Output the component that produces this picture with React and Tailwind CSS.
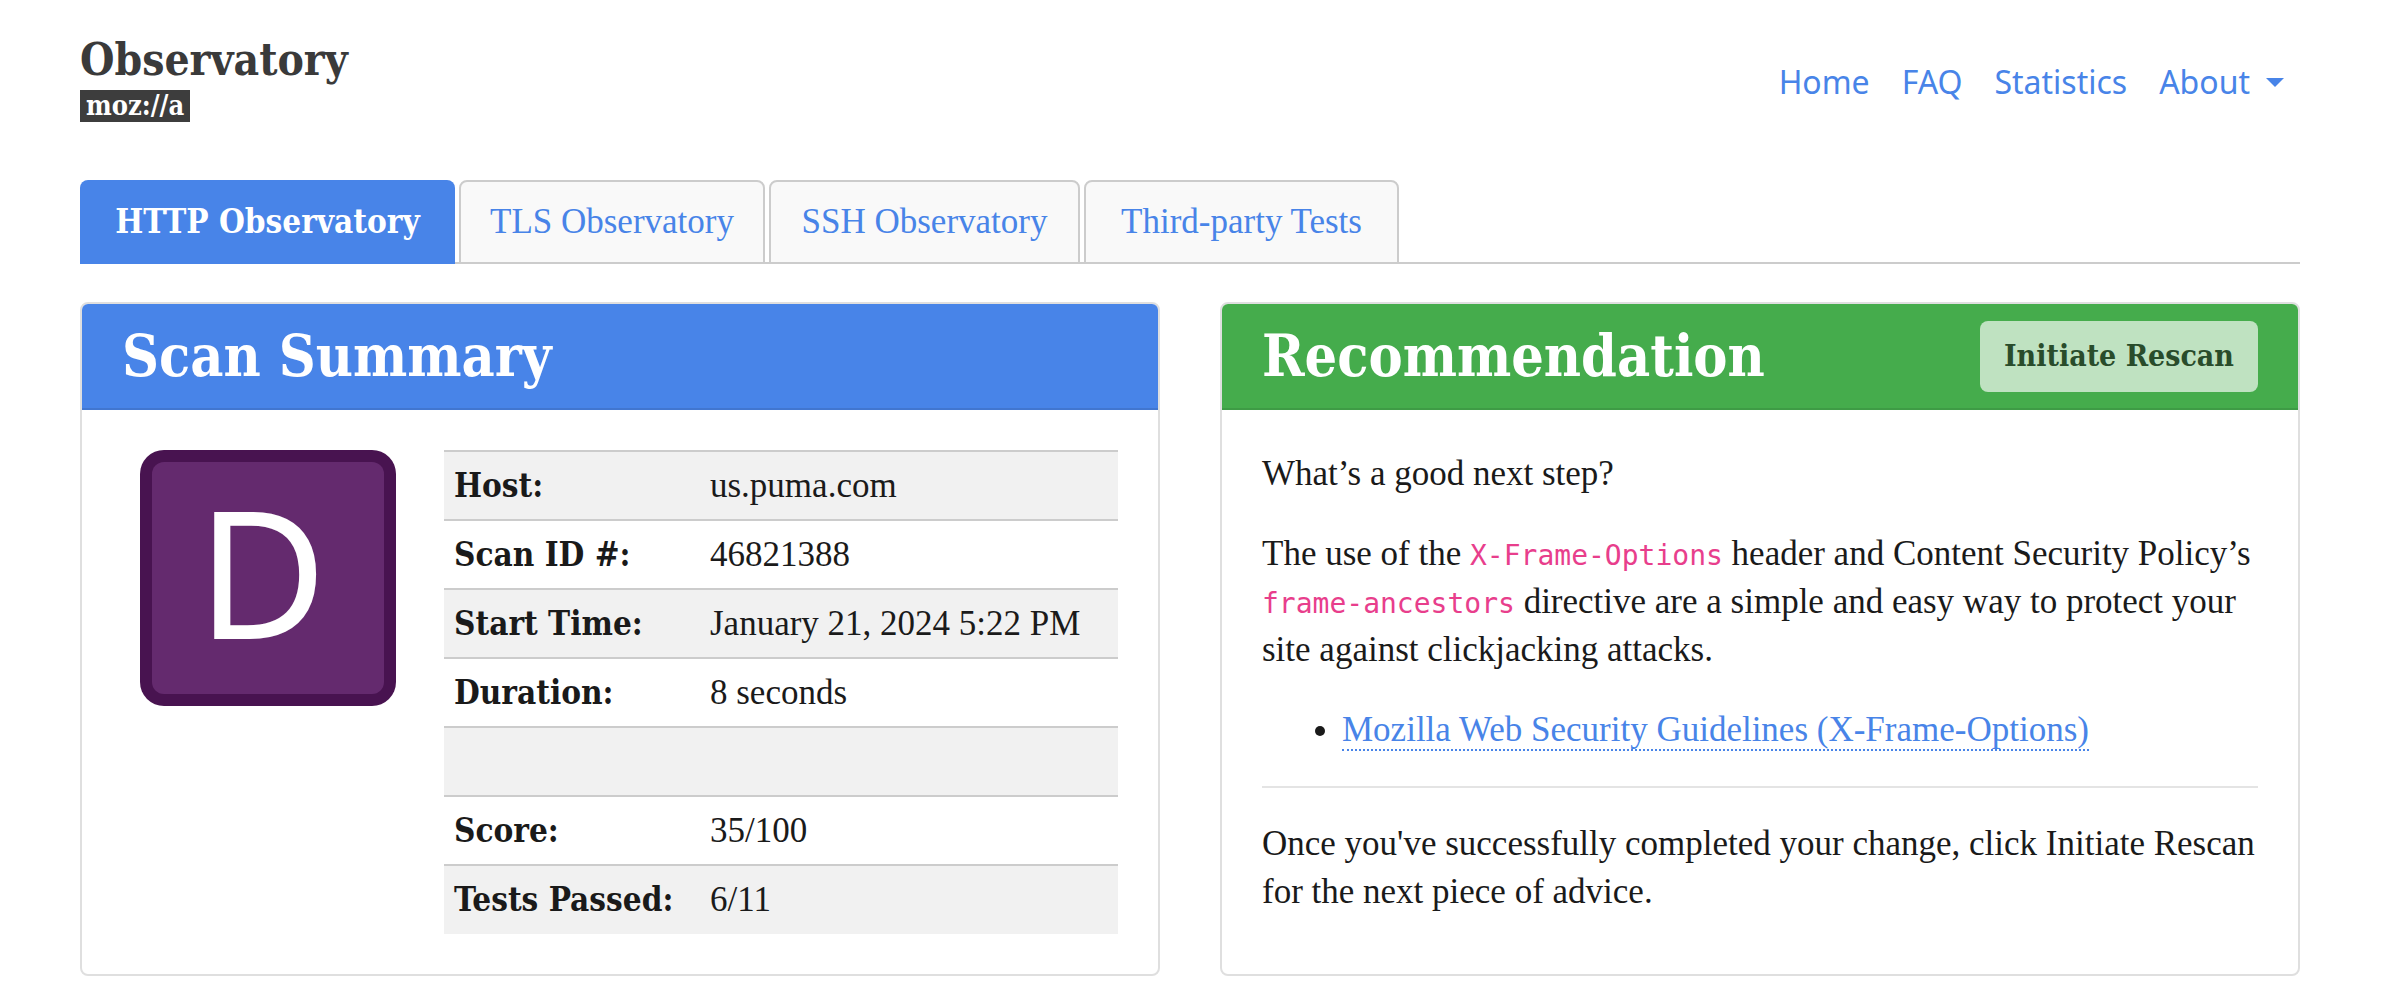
const NAV_LINKS = ["Home", "FAQ", "Statistics"];

const TABS = [
  { label: "TLS Observatory", size: "min-w-[306px]" },
  { label: "SSH Observatory", size: "min-w-[311px]" },
  { label: "Third-party Tests", size: "min-w-[315px]" },
];

const ROWS = [
  ["Host:", "us.puma.com"],
  ["Scan ID #:", "46821388"],
  ["Start Time:", "January 21, 2024 5:22 PM"],
  ["Duration:", "8 seconds"],
  ["", ""],
  ["Score:", "35/100"],
  ["Tests Passed:", "6/11"],
];

function Header() {
  return (
    <header className="flex items-end justify-between pt-9 pb-[58px]">
      <a href="#top" className="flex flex-col items-start gap-1.5 font-['DejaVu_Serif_Condensed','DejaVu_Serif',serif] font-bold">
        <span className="text-[44px] leading-[48px] text-[#3a3a3a]">Observatory</span>
        <span className="bg-[#3d3d3d] px-1.5 text-[27px] leading-[32px] text-white">moz://a</span>
      </a>
      <nav className="flex gap-8 px-4 pb-4 font-['Noto_Sans',sans-serif] text-[32px] leading-[48px] text-[#4884e8]">
        {NAV_LINKS.map((label) => (
          <a key={label} href={`#${label.toLowerCase()}`}>
            {label}
          </a>
        ))}
        <button type="button" className="flex items-center gap-4">
          About
          <svg viewBox="0 0 18 9" className="h-[9px] w-[18px] fill-current" aria-hidden="true">
            <path d="M0 0h18L9 9z" />
          </svg>
        </button>
      </nav>
    </header>
  );
}

function Tabs() {
  return (
    <div role="tablist" className="flex gap-1 shadow-[inset_0_-2px_0_#cccccc] text-[#4884e8]">
      <button
        type="button"
        role="tab"
        aria-selected="true"
        className="h-21 min-w-[375px] rounded-t-lg bg-[#4884e8] px-8 font-['DejaVu_Serif_Condensed','DejaVu_Serif',serif] text-[33px] leading-[48px] font-bold text-white"
      >
        HTTP Observatory
      </button>
      {TABS.map(({ label, size }) => (
        <button
          key={label}
          type="button"
          role="tab"
          aria-selected="false"
          className={`h-21 rounded-t-lg border-2 border-[#cccccc] bg-[#f9f9f9] px-7 text-[35px] leading-[48px] ${size}`}
        >
          {label}
        </button>
      ))}
    </div>
  );
}

function Card({ title, tone, action, children }) {
  return (
    <section className="overflow-hidden rounded-lg border-2 border-[#dfdfdf]">
      <div className={`flex h-[106px] items-center justify-between border-b-2 px-10 ${tone}`}>
        <h2 className="font-['DejaVu_Serif_Condensed','DejaVu_Serif',serif] text-[57px] leading-[64px] font-bold text-white">
          {title}
        </h2>
        {action}
      </div>
      <div className="p-10">{children}</div>
    </section>
  );
}

function GradeBadge() {
  return (
    <svg viewBox="0 0 256 256" className="mx-[18px] size-64 shrink-0" role="img" aria-label="Grade D">
      <rect width="256" height="256" rx="24" fill="#481350" />
      <rect x="12" y="12" width="232" height="232" rx="12" fill="#642a6e" />
      <text
        x="122"
        y="189"
        textAnchor="middle"
        fill="#ffffff"
        className="font-['Noto_Sans',sans-serif] text-[178px]"
      >
        D
      </text>
    </svg>
  );
}

function ScanSummary() {
  return (
    <Card title="Scan Summary" tone="bg-[#4884e8] border-[#4176d0]">
      <div className="flex items-start gap-[30px]">
        <GradeBadge />
        <table className="flex-1 border-collapse text-left">
          <tbody>
            {ROWS.map(([label, value], i) => (
              <tr key={i} className="h-[69px] border-t-2 border-[#cccccc] odd:bg-[#f1f1f1]">
                <th
                  scope="row"
                  className="w-64 px-2.5 font-['DejaVu_Serif_Condensed','DejaVu_Serif',serif] text-[33px] leading-[48px] font-bold whitespace-nowrap"
                >
                  {label}
                </th>
                <td className="px-2.5">{value}</td>
              </tr>
            ))}
          </tbody>
        </table>
      </div>
    </Card>
  );
}

function Code({ children }) {
  return (
    <code className="font-['DejaVu_Sans_Mono',monospace] text-[28px] leading-none text-[#e83e8c]">{children}</code>
  );
}

function Recommendation() {
  return (
    <Card
      title="Recommendation"
      tone="bg-[#45ac4c] border-[#3e9b45]"
      action={
        <button
          type="button"
          className="h-[71px] rounded-lg bg-[#bfe2c1] px-6 font-['DejaVu_Serif_Condensed','DejaVu_Serif',serif] text-[30px] leading-[48px] font-bold text-[#294c2b]"
        >
          Initiate Rescan
        </button>
      }
    >
      <div className="flex flex-col gap-8">
        <p>What’s a good next step?</p>
        <p>
          The use of the <Code>X-Frame-Options</Code> header and Content Security Policy’s{" "}
          <Code>frame-ancestors</Code> directive are a simple and easy way to protect your site against
          clickjacking attacks.
        </p>
        <ul className="list-disc pl-20">
          <li>
            <a href="#guidelines" className="border-b-2 border-dotted border-[#4884e8] leading-none text-[#4884e8]">
              Mozilla Web Security Guidelines (X-Frame-Options)
            </a>
          </li>
        </ul>
        <hr className="border-t-2 border-[#e4e4e4]" />
        <p>
          Once you've successfully completed your change, click Initiate Rescan for the next piece of advice.
        </p>
      </div>
    </Card>
  );
}

export default function App() {
  return (
    <div className="min-h-screen bg-white pr-[106px] pl-20 font-['Liberation_Serif',serif] text-[35px] leading-[48px] text-[#1a1a1a]">
      <Header />
      <Tabs />
      <main className="grid grid-cols-2 gap-[60px] pt-[38px] pb-6">
        <ScanSummary />
        <Recommendation />
      </main>
    </div>
  );
}
